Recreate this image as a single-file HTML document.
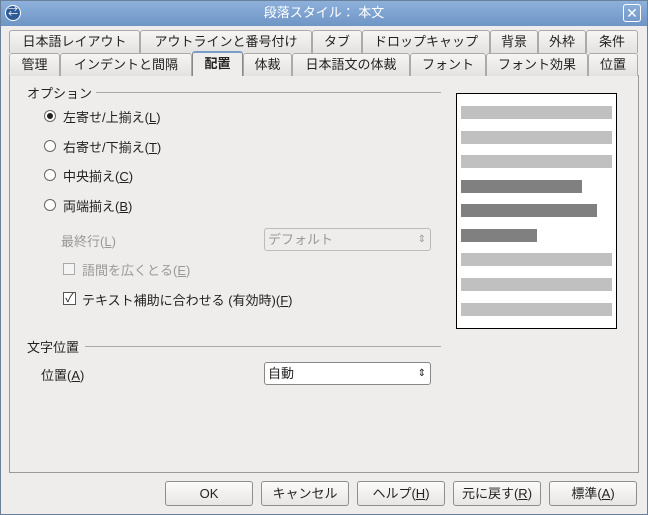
<!DOCTYPE html>
<html><head><meta charset="utf-8"><style>
*{box-sizing:border-box}
body{margin:0;width:648px;height:515px;background:#efedeb;font-family:"Liberation Sans","Noto Sans CJK JP",sans-serif;font-size:13px;color:#222;position:relative;overflow:hidden}
.a{position:absolute}
.title{left:0;top:0;width:648px;height:26px;background:linear-gradient(#8fb2dc,#6f95c6);color:#fff;text-align:center;line-height:25px;font-size:13px}
.tab{position:absolute;height:23px;border:1px solid #aaa;border-bottom:none;background:linear-gradient(#f6f5f4,#e4e2e0);text-align:center;line-height:22px;font-size:13px;border-radius:3px 3px 0 0}
.panel{left:9px;top:75px;width:630px;height:398px;border:1px solid #999;background:#efedeb}
.radio{position:absolute;width:12px;height:12px;border:1px solid #666;border-radius:50%;background:#fff}
.btn{position:absolute;top:481px;width:88px;height:25px;border:1px solid #8e8e8e;border-radius:3px;background:linear-gradient(#fbfbfa,#e8e6e4);text-align:center;line-height:23px;font-size:13px}
.bar{position:absolute;left:461px;height:13px}
u{text-decoration:underline}
</style></head><body>
<div class="a title">段落スタイル： 本文</div>
<div class="a" style="left:5px;top:5px;width:16px;height:16px;border-radius:50%;background:#2e5a96;border:1px solid #fff;color:#fff;font-size:10px;line-height:13px;text-align:center">⇄</div>
<div class="a" style="left:623px;top:4px;width:18px;height:18px;border:1px solid #fff;border-radius:3px;color:#fff;text-align:center;line-height:16px;font-size:14px">✕</div>

<div class="tab" style="left:9px;top:30px;width:131px">日本語レイアウト</div>
<div class="tab" style="left:140px;top:30px;width:172px">アウトラインと番号付け</div>
<div class="tab" style="left:312px;top:30px;width:50px">タブ</div>
<div class="tab" style="left:362px;top:30px;width:128px">ドロップキャップ</div>
<div class="tab" style="left:490px;top:30px;width:48px">背景</div>
<div class="tab" style="left:538px;top:30px;width:48px">外枠</div>
<div class="tab" style="left:586px;top:30px;width:52px">条件</div>

<div class="a panel"></div>
<div class="tab" style="left:9px;top:53px;width:51px">管理</div>
<div class="tab" style="left:60px;top:53px;width:132px">インデントと間隔</div>
<div class="tab" style="left:192px;top:51px;width:51px;height:25px;background:#efedeb;border-color:#888;font-weight:bold;border-top:2px solid #7a9cc8">配置</div>
<div class="tab" style="left:243px;top:53px;width:49px">体裁</div>
<div class="tab" style="left:292px;top:53px;width:118px">日本語文の体裁</div>
<div class="tab" style="left:410px;top:53px;width:76px">フォント</div>
<div class="tab" style="left:486px;top:53px;width:102px">フォント効果</div>
<div class="tab" style="left:588px;top:53px;width:50px">位置</div>

<div class="a" style="left:27px;top:83px">オプション</div>
<div class="a" style="left:96px;top:92px;width:345px;border-top:1px solid #aaa"></div>

<div class="radio" style="left:44px;top:110px"><div style="width:6px;height:6px;border-radius:50%;background:#222;margin:2px"></div></div>
<div class="a" style="left:63px;top:107px">左寄せ/上揃え(<u>L</u>)</div>
<div class="radio" style="left:44px;top:140px"></div>
<div class="a" style="left:63px;top:137px">右寄せ/下揃え(<u>T</u>)</div>
<div class="radio" style="left:44px;top:169px"></div>
<div class="a" style="left:63px;top:166px">中央揃え(<u>C</u>)</div>
<div class="radio" style="left:44px;top:199px"></div>
<div class="a" style="left:63px;top:196px">両端揃え(<u>B</u>)</div>

<div class="a" style="left:61px;top:231px;color:#999">最終行(<u>L</u>)</div>
<div class="a" style="left:264px;top:228px;width:167px;height:23px;border:1px solid #bbb;border-radius:3px;color:#999;padding-left:3px;line-height:21px">デフォルト<span style="position:absolute;right:4px;top:0;font-size:10px">⇕</span></div>

<div class="a" style="left:63px;top:263px;width:12px;height:12px;border:1px solid #aaa;background:#f4f4f4"></div>
<div class="a" style="left:82px;top:260px;color:#999">語間を広くとる(<u>E</u>)</div>
<div class="a" style="left:63px;top:292px;width:13px;height:13px;border:1px solid #555;background:#fff;font-size:12px;line-height:11px;text-align:center">✓</div>
<div class="a" style="left:82px;top:290px">テキスト補助に合わせる (有効時)(<u>F</u>)</div>

<div class="a" style="left:27px;top:337px">文字位置</div>
<div class="a" style="left:85px;top:346px;width:356px;border-top:1px solid #aaa"></div>
<div class="a" style="left:41px;top:365px">位置(<u>A</u>)</div>
<div class="a" style="left:264px;top:362px;width:167px;height:23px;border:1px solid #888;border-radius:3px;background:#fff;padding-left:3px;line-height:21px">自動<span style="position:absolute;right:4px;top:0;font-size:10px">⇕</span></div>

<div class="a" style="left:456px;top:93px;width:161px;height:236px;border:1px solid #000;background:#fff"></div>
<div class="bar" style="top:106px;width:151px;background:#c0c0c0"></div>
<div class="bar" style="top:131px;width:151px;background:#c0c0c0"></div>
<div class="bar" style="top:155px;width:151px;background:#c0c0c0"></div>
<div class="bar" style="top:180px;width:121px;background:#808080"></div>
<div class="bar" style="top:204px;width:136px;background:#808080"></div>
<div class="bar" style="top:229px;width:76px;background:#808080"></div>
<div class="bar" style="top:253px;width:151px;background:#c0c0c0"></div>
<div class="bar" style="top:278px;width:151px;background:#c0c0c0"></div>
<div class="bar" style="top:303px;width:151px;background:#c0c0c0"></div>

<div class="btn" style="left:165px">OK</div>
<div class="btn" style="left:261px">キャンセル</div>
<div class="btn" style="left:357px">ヘルプ(<u>H</u>)</div>
<div class="btn" style="left:453px">元に戻す(<u>R</u>)</div>
<div class="btn" style="left:549px">標準(<u>A</u>)</div>
<div class="a" style="left:0;top:0;width:648px;height:515px;border:1px solid #6a7f9a;pointer-events:none"></div>
</body></html>
